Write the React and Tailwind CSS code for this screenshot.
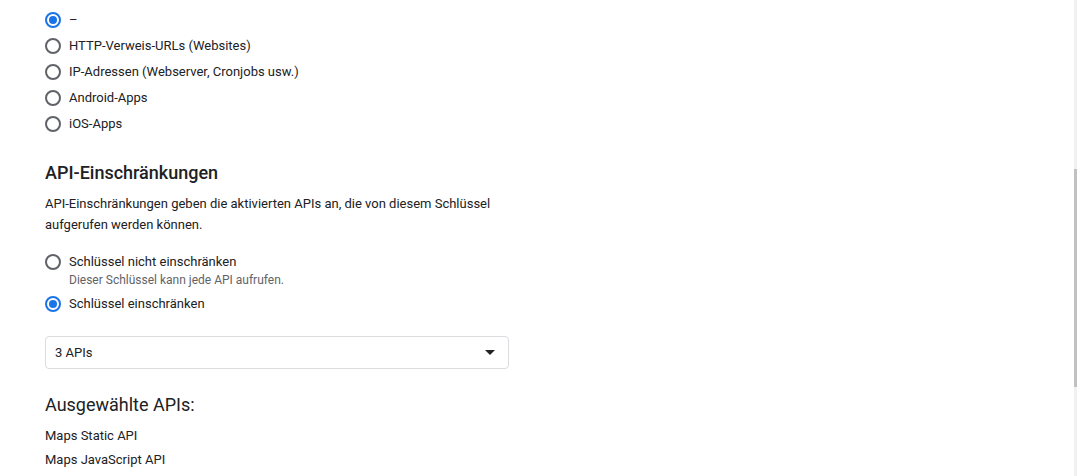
import React from 'react'

const Radio = ({ checked }) => (
    <span className={`flex items-center justify-center w-4 h-4 rounded-full border-2 shrink-0 ${checked ? 'border-[#1a73e8]' : 'border-[#5f6368]'}`}>
        {checked && <span className="w-2 h-2 rounded-full bg-[#1a73e8]" />}
    </span>
)

const RadioRow = ({ checked, label, hint }) => (
    <div className="flex items-start gap-2">
        <span className="h-[26px] flex items-center"><Radio checked={checked} /></span>
        <div>
            <div className="h-[26px] leading-[26px]">{label}</div>
            {hint && <div className="text-[12px] text-[#5f6368] leading-[14px] -mt-[2px] mb-[4px]">{hint}</div>}
        </div>
    </div>
)

const App = () => {
    const apps = ['HTTP-Verweis-URLs (Websites)', 'IP-Adressen (Webserver, Cronjobs usw.)', 'Android-Apps', 'iOS-Apps']

    return (
        <div className="flex h-[476px] w-[1077px] overflow-hidden bg-white text-[#202124] text-[13px]" style={{ fontFamily: 'Roboto, "Noto Sans", sans-serif' }}>
            <div className="flex-1 pl-[45px] pt-[7px]">
                <RadioRow checked label="–" />
                {apps.map(a => <RadioRow key={a} label={a} />)}

                <h2 className="mt-[24px] text-[18px] font-medium leading-6">API-Einschränkungen</h2>
                <p className="mt-[8px] w-[470px] leading-[21px]">
                    API-Einschränkungen geben die aktivierten APIs an, die von diesem Schlüssel aufgerufen werden können.
                </p>

                <div className="mt-[14px]">
                    <RadioRow label="Schlüssel nicht einschränken" hint="Dieser Schlüssel kann jede API aufrufen." />
                    <RadioRow checked label="Schlüssel einschränken" />
                </div>

                <div className="mt-[19px] w-[464px] h-[33px] flex items-center justify-between border border-[#dadce0] rounded pl-[9px] pr-[13px]">
                    <span>3 APIs</span>
                    <span className="w-0 h-0 border-l-[5px] border-r-[5px] border-t-[5px] border-l-transparent border-r-transparent border-t-[#202124]" />
                </div>

                <h2 className="mt-[24px] text-[18px] leading-6">Ausgewählte APIs:</h2>
                <div className="mt-[7px] leading-[24px]">
                    <div>Maps Static API</div>
                    <div>Maps JavaScript API</div>
                </div>
            </div>
            <div className="w-[3px] bg-[#f1f1f1] flex flex-col">
                <div className="h-[169px]" />
                <div className="h-[218px] bg-[#c1c1c1]" />
            </div>
        </div>
    )
}

export default App
